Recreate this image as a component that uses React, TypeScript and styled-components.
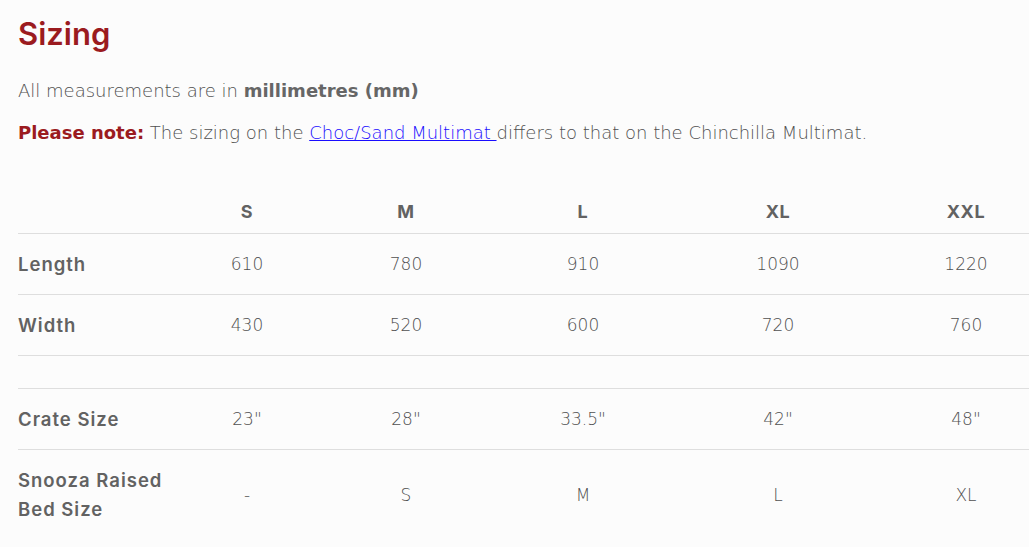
import { createGlobalStyle, styled } from "styled-components";

const GlobalStyle = createGlobalStyle`
  html, body {
    margin: 0;
    padding: 0;
    background: #fcfcfc;
    overflow: hidden;
  }
  body {
    font-family: "DejaVu Sans", "Open Sans", sans-serif;
  }
`;

const sizes = ["S", "M", "L", "XL", "XXL"];

const rows: { label: string; values: string[] }[] = [
  { label: "Length", values: ["610", "780", "910", "1090", "1220"] },
  { label: "Width", values: ["430", "520", "600", "720", "760"] },
];

const lowerRows: { label: string; values: string[] }[] = [
  { label: "Crate Size", values: ['23"', '28"', '33.5"', '42"', '48"'] },
  { label: "Snooza Raised Bed Size", values: ["-", "S", "M", "L", "XL"] },
];

const App = () => {
  return (
    <>
      <GlobalStyle />
      <Page>
        <Title>Sizing</Title>
        <Intro>
          All measurements are in <strong>millimetres (mm)</strong>
        </Intro>
        <Note>
          <Warn>Please note:</Warn> The sizing on the{" "}
          <a href="#">Choc/Sand Multimat </a>differs to that on the Chinchilla
          Multimat.
        </Note>
        <Table>
          <thead>
            <tr>
              <Head />
              {sizes.map((s) => (
                <Head key={s}>{s}</Head>
              ))}
            </tr>
          </thead>
          <tbody>
            {rows.map((r) => (
              <Row key={r.label}>
                <Label>{r.label}</Label>
                {r.values.map((v, i) => (
                  <Cell key={i}>{v}</Cell>
                ))}
              </Row>
            ))}
            <Row>
              <Spacer colSpan={6} />
            </Row>
            {lowerRows.map((r) => (
              <Row key={r.label}>
                <Label>{r.label}</Label>
                {r.values.map((v, i) => (
                  <Cell key={i}>{v}</Cell>
                ))}
              </Row>
            ))}
          </tbody>
        </Table>
      </Page>
    </>
  );
};

export default App;

const Page = styled.div`
  padding: 14px 0 0 18px;
  color: #505050;
`;

const Title = styled.h2`
  margin: 0;
  font-family: Inter, "Open Sans", sans-serif;
  font-size: 31px;
  font-weight: 600;
  color: #9b1b1f;
  line-height: 40px;
`;

const Intro = styled.p`
  margin: 22px 0 0;
  font-size: 18px;
  font-weight: 300;
  line-height: 30px;

  strong {
    font-weight: 700;
    color: #666;
  }
`;

const Note = styled.p`
  margin: 12px 0 0;
  font-size: 18px;
  font-weight: 300;
  line-height: 30px;

  a {
    color: #1a0dff;
    text-decoration: underline;
  }
`;

const Warn = styled.strong`
  color: #9b1b1f;
  font-weight: 700;
`;

const Table = styled.table`
  margin-top: 14px;
  width: 1039px;
  border-collapse: collapse;
  table-layout: fixed;
`;

const Head = styled.th`
  height: 60px;
  padding: 0 0 11px;
  vertical-align: bottom;
  text-align: center;
  font-family: Inter, "Open Sans", sans-serif;
  font-weight: 700;
  font-size: 18px;
  letter-spacing: 0.6px;
  color: #626262;

  &:first-child {
    width: 149px;
  }
  &:nth-child(2) {
    width: 160px;
  }
  &:nth-child(3) {
    width: 158px;
  }
  &:nth-child(4) {
    width: 196px;
  }
  &:nth-child(5) {
    width: 194px;
  }
`;

const Row = styled.tr`
  border-top: 1px solid #dedede;
`;

const Label = styled.td`
  padding: 15.5px 0;
  text-align: left;
  font-family: Inter, "Open Sans", sans-serif;
  font-weight: 600;
  font-size: 18.5px;
  letter-spacing: 1px;
  line-height: 29px;
  color: #626262;
`;

const Cell = styled.td`
  text-align: center;
  font-size: 17px;
  font-weight: 300;
  color: #505050;
`;

const Spacer = styled.td`
  height: 32px;
  padding: 0;
  line-height: 0;
  font-size: 0;
`;
